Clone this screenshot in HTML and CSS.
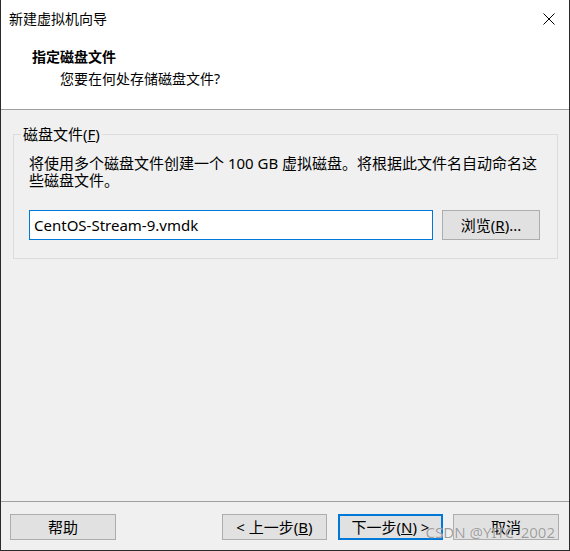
FILE: index.html
```html
<!DOCTYPE html>
<html lang="zh-CN">
<head>
  <meta charset="UTF-8">
  <title>新建虚拟机向导</title>
  <link rel="stylesheet" href="styles.css">
</head>
<body>
  <div class="window">
    <div class="titlebar">
      <span class="title">新建虚拟机向导</span>
      <svg class="close" width="12" height="12" viewBox="0 0 12 12">
        <path d="M0.5 0.5 L11.5 11.5 M11.5 0.5 L0.5 11.5" stroke="#000" stroke-width="1" fill="none"/>
      </svg>
    </div>
    <div class="header">
      <div class="heading">指定磁盘文件</div>
      <div class="subheading">您要在何处存储磁盘文件?</div>
    </div>
    <div class="content">
      <fieldset class="group">
        <legend>磁盘文件(<u>F</u>)</legend>
        <p class="desc">将使用多个磁盘文件创建一个 100 GB 虚拟磁盘。将根据此文件名自动命名这<br>些磁盘文件。</p>
        <div class="file-row">
          <input class="file-input" type="text" value="CentOS-Stream-9.vmdk">
          <button class="btn browse">浏览(<u>R</u>)...</button>
        </div>
      </fieldset>
    </div>
    <div class="footer">
      <button class="btn">帮助</button>
      <button class="btn prev">&lt; 上一步(<u>B</u>)</button>
      <button class="btn next">下一步(<u>N</u>) &gt;</button>
      <button class="btn">取消</button>
      <span class="watermark">CSDN @YITC_2002</span>
    </div>
  </div>
</body>
</html>
```

FILE: styles.css
```css
* {
  box-sizing: border-box;
}
body {
  margin: 0;
  font-family: "Noto Sans", "Noto Sans CJK SC", sans-serif;
  color: #000;
  background: #fff;
}
.window {
  width: 570px;
  height: 551px;
  display: flex;
  flex-direction: column;
  border: 1px solid #2b2b2b;
  border-top: none;
  background-color: #f0f0f0;
  position: relative;
}
.titlebar {
  height: 37px;
  background: #fff;
  display: flex;
  align-items: center;
  padding: 0 14px 0 8px;
}
.title {
  flex: 1;
  font-size: 14px;
  line-height: 18px;
}
.close {
  margin-top: 1px;
}
.header {
  height: 73px;
  background: #fff;
  border-bottom: 1px solid #a0a0a0;
  padding: 10px 0 0 31px;
}
.heading {
  font-size: 14px;
  font-weight: bold;
  line-height: 20px;
}
.subheading {
  font-size: 14px;
  line-height: 20px;
  margin: 2px 0 0 28px;
}
.content {
  flex: 1;
  padding: 16px 11px 0 12px;
  font-size: 15px;
}
.group {
  margin: 0;
  border: 1px solid #dcdcdc;
  padding: 0 17px 18px 15px;
}
.group legend {
  font-size: 15px;
  line-height: 17px;
  padding: 0 2px;
  margin-left: -8px;
}
.desc {
  margin: 12px 0 0;
  line-height: 17px;
  white-space: nowrap;
}
.file-row {
  display: flex;
  gap: 9px;
  margin-top: 21px;
}
.file-input {
  flex: 1;
  height: 30px;
  border: 1px solid #0078d7;
  padding: 0 4px;
  font-family: "Noto Sans", "Noto Sans CJK SC", sans-serif;
  font-size: 15px;
  color: #000;
  background: #fff;
  outline: none;
}
.btn {
  width: 106px;
  height: 26px;
  padding: 0;
  border: 1px solid #adadad;
  background-color: #e1e1e1;
  font-family: "Noto Sans", "Noto Sans CJK SC", sans-serif;
  font-size: 15px;
  line-height: 20px;
  color: #000;
}
.browse {
  width: 98px;
  height: 30px;
}
.footer {
  height: 49px;
  border-top: 1px solid #a0a0a0;
  display: flex;
  align-items: flex-start;
  padding: 12px 10px 0 9px;
}
.prev {
  margin-left: auto;
  width: 105px;
}
.next {
  width: 105px;
  margin: 0 10px 0 11px;
  border: 2px solid #0078d7;
}
.watermark {
  position: absolute;
  right: 14px;
  bottom: 9px;
  font-size: 15px;
  line-height: 18px;
  color: rgba(140, 140, 140, 0.85);
  text-shadow: 0 0 1px #fff;
  pointer-events: none;
}
```
